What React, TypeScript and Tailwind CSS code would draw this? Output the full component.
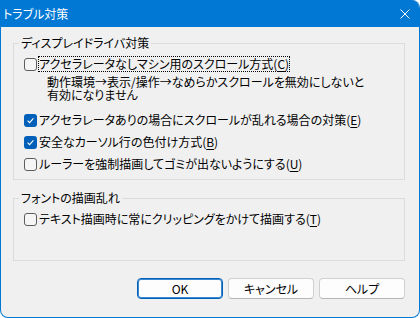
import React from "react";
import clsx from "clsx";

const jp = "font-['Noto_Sans_CJK_JP',sans-serif] [font-feature-settings:'palt']";

function CheckBox({ checked }: { checked?: boolean }) {
  if (checked) {
    return (
      <span className="flex h-[13px] w-[13px] shrink-0 items-center justify-center rounded-[3px] bg-[#005fb8]">
        <svg width="9" height="9" viewBox="0 0 9 9">
          <path d="M1.6 4.7 3.6 6.6 7.4 2.4" fill="none" stroke="#ffffff" strokeWidth="1.1" />
        </svg>
      </span>
    );
  }
  return <span className="h-[13px] w-[13px] shrink-0 rounded-[3px] border border-[#5d5d5d] bg-[#f5f5f5]" />;
}

function Option({
  checked,
  label,
  mnemonic,
  focused,
}: {
  checked?: boolean;
  label: string;
  mnemonic: string;
  focused?: boolean;
}) {
  return (
    <div className="flex h-[16px] items-center">
      <CheckBox checked={checked} />
      <span
        className={clsx(
          "ml-[1px] border leading-[14px] whitespace-nowrap",
          focused ? "border-dotted border-black" : "border-transparent",
        )}
      >
        {label}(<span className="underline underline-offset-2">{mnemonic}</span>)
      </span>
    </div>
  );
}

function Button({ label, isDefault }: { label: string; isDefault?: boolean }) {
  return (
    <button
      className={clsx(
        "flex h-[21px] w-[86px] items-center justify-center rounded-[4px] bg-[#fdfdfd] text-[12px] text-black",
        isDefault
          ? "border border-[#005fb8] shadow-[inset_0_0_0_1px_#3b8ad0]"
          : "border border-[#d0d0d0] border-b-[#b5b5b5]",
      )}
    >
      {label}
    </button>
  );
}

export default function App() {
  return (
    <div className={clsx("h-[318px] w-[420px] bg-white text-[12px] text-black", jp)}>
      <div className="flex h-full flex-col overflow-hidden rounded-tr-[8px] rounded-b-[8px] border-x border-b border-[#0078d4] bg-[#f0f0f0]">
        {/* Title bar */}
        <div className="flex h-[27px] shrink-0 items-center justify-between bg-[#0078d4] pl-[2px] pr-[9px] text-white">
          <span className="leading-[16px]">トラブル対策</span>
          <svg width="10" height="10" viewBox="0 0 10 10">
            <path d="M0.5 0.5 9.5 9.5 M9.5 0.5 0.5 9.5" stroke="#ffffff" strokeWidth="1" />
          </svg>
        </div>

        <div className="flex flex-1 flex-col pl-[12px] pr-[14px]">
          {/* Display driver group */}
          <fieldset className="mt-[8px] border border-[#dcdcdc] p-0">
            <legend className="ml-[5px] px-[2px] leading-[16px]">ディスプレイドライバ対策</legend>
            <div className="flex flex-col pl-[10px] pt-[5px] pb-[7px]">
              <Option label="アクセラレータなしマシン用のスクロール方式" mnemonic="C" focused />
              <div className="mt-[3px] pl-[23px] leading-[13px]">
                動作環境→表示/操作→なめらかスクロールを無効にしないと
                <br />
                有効になりません
              </div>
              <div className="mt-[11px] flex flex-col gap-[6px]">
                <Option checked label="アクセラレータありの場合にスクロールが乱れる場合の対策" mnemonic="E" />
                <Option checked label="安全なカーソル行の色付け方式" mnemonic="B" />
                <Option label="ルーラーを強制描画してゴミが出ないようにする" mnemonic="U" />
              </div>
            </div>
          </fieldset>

          {/* Font group */}
          <fieldset className="mt-[10px] h-[71px] border border-[#dcdcdc] p-0">
            <legend className="ml-[5px] px-[2px] leading-[16px]">フォントの描画乱れ</legend>
            <div className="flex flex-col pl-[10px] pt-[5px]">
              <Option label="テキスト描画時に常にクリッピングをかけて描画する" mnemonic="T" />
            </div>
          </fieldset>

          {/* Buttons */}
          <div className="mt-[17px] flex justify-end gap-[5px]">
            <Button label="OK" isDefault />
            <Button label="キャンセル" />
            <Button label="ヘルプ" />
          </div>
        </div>
      </div>
    </div>
  );
}
